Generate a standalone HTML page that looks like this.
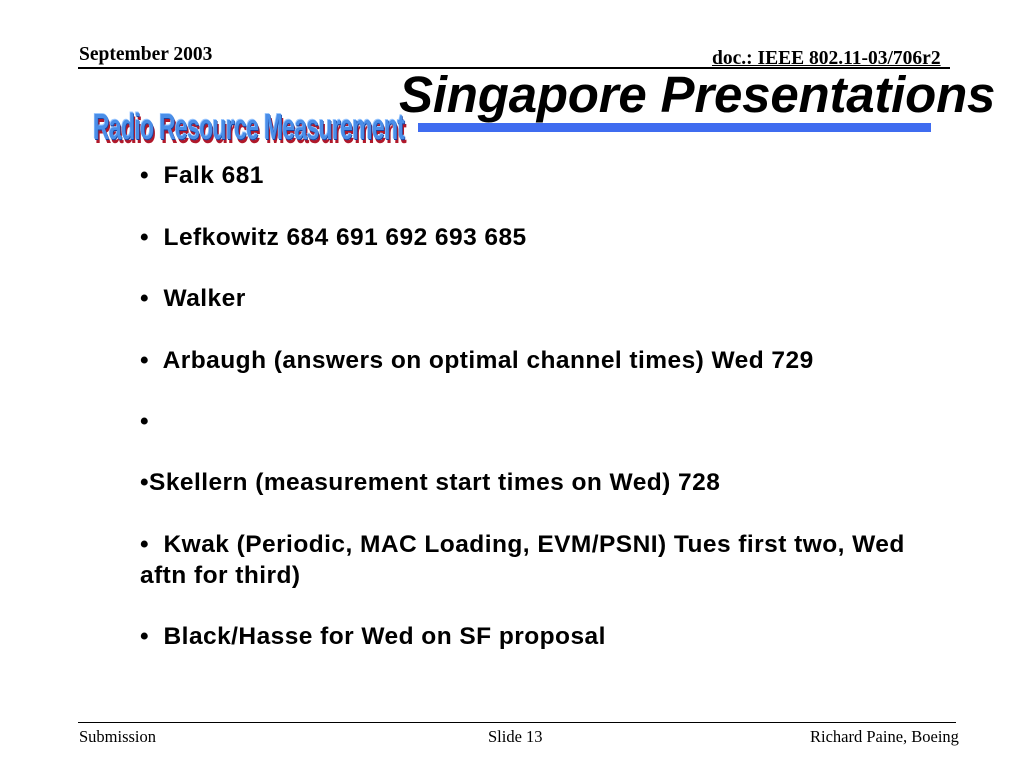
<!DOCTYPE html>
<html><head><meta charset="utf-8"><style>
body{margin:0;width:1024px;height:768px;background:#fff;position:relative;overflow:hidden;font-family:"Liberation Sans",Arial,sans-serif}
.t{position:absolute;white-space:nowrap}
.hdr{font-family:"Liberation Serif",serif;font-weight:bold;font-size:19.5px;color:#000}
.b{font-weight:bold;font-size:24.5px;letter-spacing:0.45px;color:#000;left:140px}
.ft{font-family:"Liberation Serif",serif;font-size:16.5px;top:727px}
.logo{left:93px;top:106px;font-family:"Liberation Sans",sans-serif;font-weight:bold;font-size:36px;color:#4a8ee8;transform-origin:0 0;transform:scaleX(0.635);letter-spacing:-1px;text-shadow:1px 1px 0 #1a3f9a,-1px -1px 0 #9cc8ff,3px 4px 0 #b0182a}
</style></head><body>
<div class="t hdr" style="left:79px;top:44px">September 2003</div>
<div class="t hdr" style="left:712px;top:48px;text-decoration:underline">doc.: IEEE 802.11-03/706r2</div>
<div style="position:absolute;left:78px;top:67px;width:872px;height:2px;background:#000"></div>
<div class="t" style="left:399px;top:65px;font-size:51px;font-weight:bold;font-style:italic;letter-spacing:-0.2px">Singapore Presentations</div>
<div style="position:absolute;left:418px;top:123px;width:513px;height:9px;background:#3f6cf0"></div>
<div class="t logo">Radio Resource Measurement</div>
<div class="t b" style="top:162px">•&nbsp; Falk 681</div>
<div class="t b" style="top:224px">•&nbsp; Lefkowitz 684 691 692 693 685</div>
<div class="t b" style="top:285px">•&nbsp; Walker</div>
<div class="t b" style="top:347px">•&nbsp; Arbaugh (answers on optimal channel times) Wed 729</div>
<div class="t b" style="top:408px">•</div>
<div class="t b" style="top:469px">•Skellern (measurement start times on Wed) 728</div>
<div class="t b" style="top:531px">•&nbsp; Kwak (Periodic, MAC Loading, EVM/PSNI) Tues first two, Wed</div>
<div class="t b" style="top:562px">aftn for third)</div>
<div class="t b" style="top:623px">•&nbsp; Black/Hasse for Wed on SF proposal</div>
<div style="position:absolute;left:78px;top:722px;width:878px;height:1px;background:#000"></div>
<div class="t ft" style="left:79px">Submission</div>
<div class="t ft" style="left:488px">Slide 13</div>
<div class="t ft" style="left:810px">Richard Paine, Boeing</div>
</body></html>
